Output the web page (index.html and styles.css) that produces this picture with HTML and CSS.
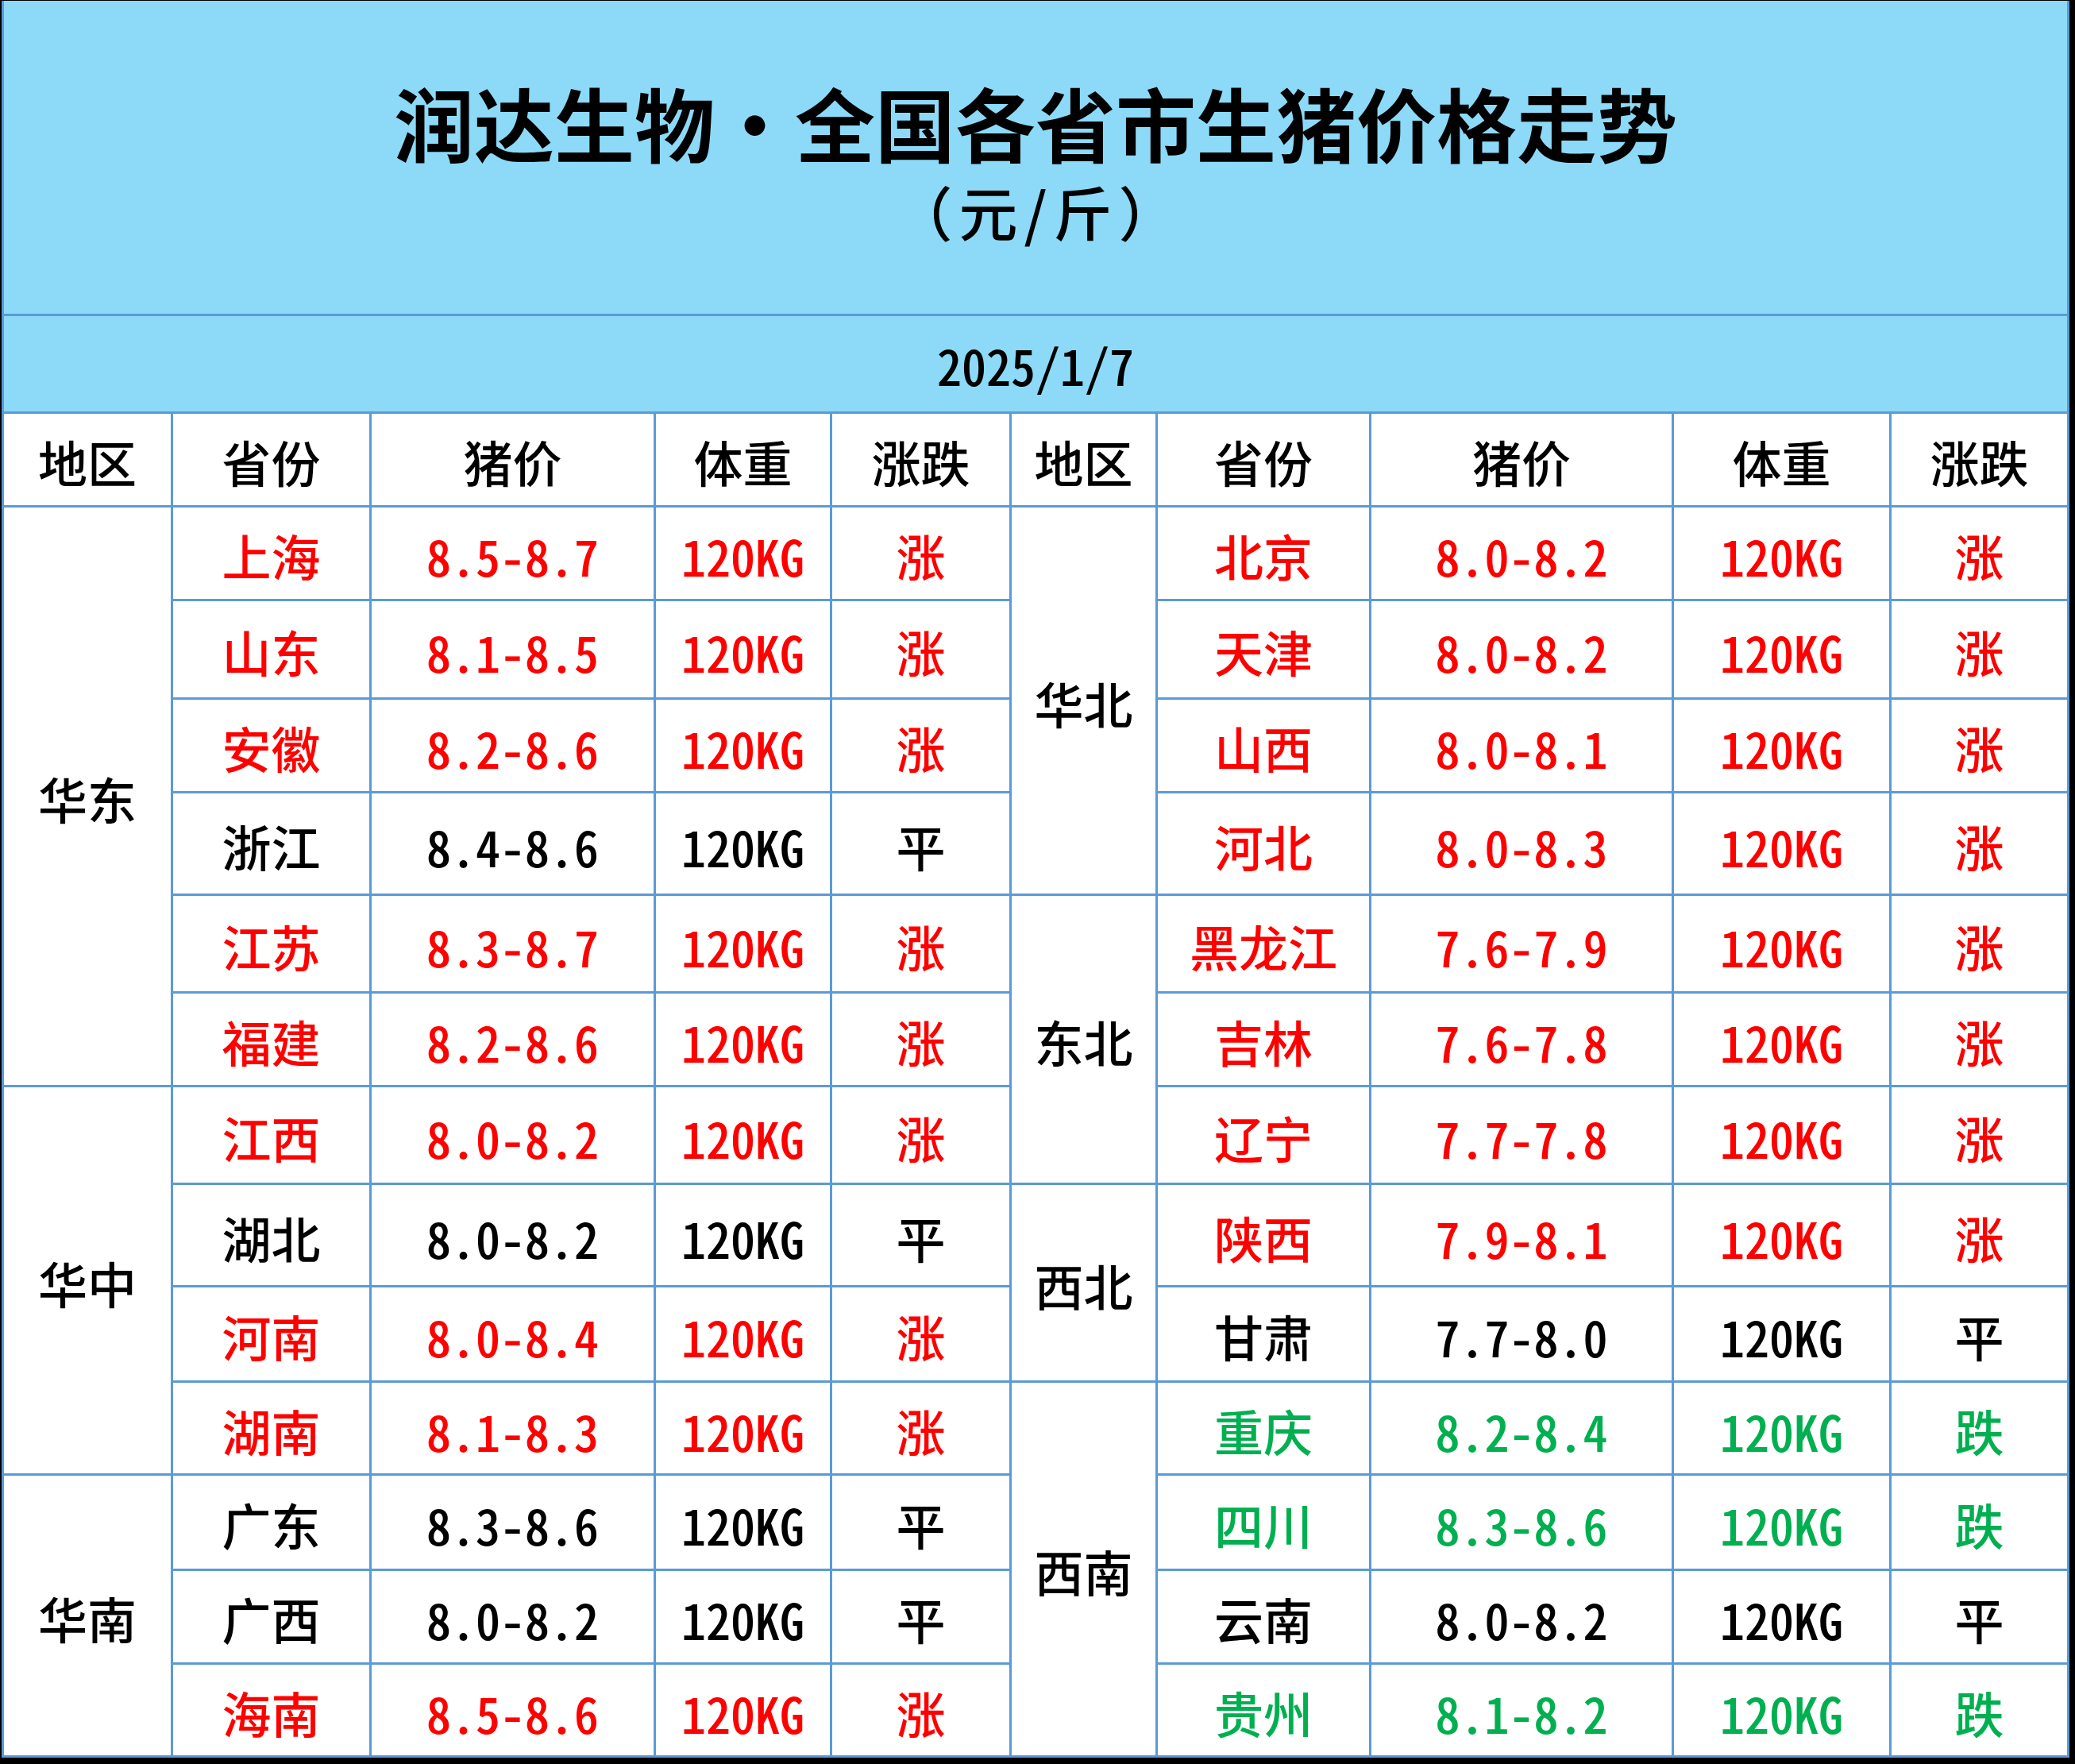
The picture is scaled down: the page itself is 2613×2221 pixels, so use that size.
FILE: index.html
```html
<!DOCTYPE html>
<html lang="zh-CN">
<head>
<meta charset="utf-8">
<title>润达生物·全国各省市生猪价格走势</title>
<link rel="stylesheet" href="styles.css">
</head>
<body>
<div class="sheet">
  <div class="title">
    <div class="title-main">润达生物·全国各省市生猪价格走势</div>
    <div class="title-sub">（元/斤）</div>
  </div>
  <div class="date num">2025/1/7</div>

  <div class="cell head">地区</div>
  <div class="cell head">省份</div>
  <div class="cell head">猪价</div>
  <div class="cell head">体重</div>
  <div class="cell head">涨跌</div>
  <div class="cell head">地区</div>
  <div class="cell head">省份</div>
  <div class="cell head">猪价</div>
  <div class="cell head">体重</div>
  <div class="cell head">涨跌</div>

  <!-- row 1 -->
  <div class="cell region span6">华东</div>
  <div class="cell up">上海</div><div class="cell num up">8.5-8.7</div><div class="cell num up">120KG</div><div class="cell up">涨</div>
  <div class="cell region span4">华北</div>
  <div class="cell up">北京</div><div class="cell num up">8.0-8.2</div><div class="cell num up">120KG</div><div class="cell up">涨</div>
  <!-- row 2 -->
  <div class="cell up">山东</div><div class="cell num up">8.1-8.5</div><div class="cell num up">120KG</div><div class="cell up">涨</div>
  <div class="cell up">天津</div><div class="cell num up">8.0-8.2</div><div class="cell num up">120KG</div><div class="cell up">涨</div>
  <!-- row 3 -->
  <div class="cell up">安徽</div><div class="cell num up">8.2-8.6</div><div class="cell num up">120KG</div><div class="cell up">涨</div>
  <div class="cell up">山西</div><div class="cell num up">8.0-8.1</div><div class="cell num up">120KG</div><div class="cell up">涨</div>
  <!-- row 4 -->
  <div class="cell">浙江</div><div class="cell num">8.4-8.6</div><div class="cell num">120KG</div><div class="cell">平</div>
  <div class="cell up">河北</div><div class="cell num up">8.0-8.3</div><div class="cell num up">120KG</div><div class="cell up">涨</div>
  <!-- row 5 -->
  <div class="cell up">江苏</div><div class="cell num up">8.3-8.7</div><div class="cell num up">120KG</div><div class="cell up">涨</div>
  <div class="cell region span3">东北</div>
  <div class="cell up">黑龙江</div><div class="cell num up">7.6-7.9</div><div class="cell num up">120KG</div><div class="cell up">涨</div>
  <!-- row 6 -->
  <div class="cell up">福建</div><div class="cell num up">8.2-8.6</div><div class="cell num up">120KG</div><div class="cell up">涨</div>
  <div class="cell up">吉林</div><div class="cell num up">7.6-7.8</div><div class="cell num up">120KG</div><div class="cell up">涨</div>
  <!-- row 7 -->
  <div class="cell region span4">华中</div>
  <div class="cell up">江西</div><div class="cell num up">8.0-8.2</div><div class="cell num up">120KG</div><div class="cell up">涨</div>
  <div class="cell up">辽宁</div><div class="cell num up">7.7-7.8</div><div class="cell num up">120KG</div><div class="cell up">涨</div>
  <!-- row 8 -->
  <div class="cell">湖北</div><div class="cell num">8.0-8.2</div><div class="cell num">120KG</div><div class="cell">平</div>
  <div class="cell region span2">西北</div>
  <div class="cell up">陕西</div><div class="cell num up">7.9-8.1</div><div class="cell num up">120KG</div><div class="cell up">涨</div>
  <!-- row 9 -->
  <div class="cell up">河南</div><div class="cell num up">8.0-8.4</div><div class="cell num up">120KG</div><div class="cell up">涨</div>
  <div class="cell">甘肃</div><div class="cell num">7.7-8.0</div><div class="cell num">120KG</div><div class="cell">平</div>
  <!-- row 10 -->
  <div class="cell up">湖南</div><div class="cell num up">8.1-8.3</div><div class="cell num up">120KG</div><div class="cell up">涨</div>
  <div class="cell region span4">西南</div>
  <div class="cell down">重庆</div><div class="cell num down">8.2-8.4</div><div class="cell num down">120KG</div><div class="cell down">跌</div>
  <!-- row 11 -->
  <div class="cell region span3">华南</div>
  <div class="cell">广东</div><div class="cell num">8.3-8.6</div><div class="cell num">120KG</div><div class="cell">平</div>
  <div class="cell down">四川</div><div class="cell num down">8.3-8.6</div><div class="cell num down">120KG</div><div class="cell down">跌</div>
  <!-- row 12 -->
  <div class="cell">广西</div><div class="cell num">8.0-8.2</div><div class="cell num">120KG</div><div class="cell">平</div>
  <div class="cell">云南</div><div class="cell num">8.0-8.2</div><div class="cell num">120KG</div><div class="cell">平</div>
  <!-- row 13 -->
  <div class="cell up">海南</div><div class="cell num up">8.5-8.6</div><div class="cell num up">120KG</div><div class="cell up">涨</div>
  <div class="cell down">贵州</div><div class="cell num down">8.1-8.2</div><div class="cell num down">120KG</div><div class="cell down">跌</div>
</div>
</body>
</html>
```

FILE: styles.css
```css
html, body {
  margin: 0;
  padding: 0;
  background: #000;
}

body {
  padding-top: 1px;
}

.sheet {
  display: grid;
  box-sizing: border-box;
  width: 2604px;
  margin-left: 2px;
  border-left: 3px solid #5b9bd5;
  background: #fff;
  grid-template-columns: 213px 250px 358px 222px 226px 184px 269px 381px 274px 224px;
  grid-template-rows: 397px 123px 118px 118px 124px 118px 129px 123px 118px 123px 129px 120px 117px 120px 118px 117px;
  font-family: "Noto Sans CJK SC", "Noto Sans", sans-serif;
  font-weight: 500;
  color: #000;
}

.title {
  grid-column: 1 / -1;
  box-sizing: border-box;
  background: #8cdaf7;
  border-right: 3px solid #5b9bd5;
  border-bottom: 3px solid #5b9bd5;
  display: flex;
  flex-direction: column;
  align-items: center;
  justify-content: flex-start;
  padding-top: 97px;
}

.title-main {
  font-size: 101px;
  line-height: 110px;
  font-weight: 700;
  font-feature-settings: "fwid";
}

.title-sub {
  font-size: 74px;
  line-height: 84px;
  font-weight: 500;
  letter-spacing: 8px;
  margin-top: 15px;
  padding-left: 8px;
}

.date {
  grid-column: 1 / -1;
  box-sizing: border-box;
  background: #8cdaf7;
  border-right: 3px solid #5b9bd5;
  border-bottom: 3px solid #5b9bd5;
  display: flex;
  align-items: center;
  justify-content: center;
  font-size: 62px;
  padding-top: 2px;
}

.cell {
  box-sizing: border-box;
  border-right: 3px solid #5b9bd5;
  border-bottom: 3px solid #5b9bd5;
  display: flex;
  align-items: center;
  justify-content: center;
  font-size: 62px;
  line-height: 1;
  padding-top: 5px;
  white-space: nowrap;
}

.num {
  font-feature-settings: "hwid";
}

.up { color: #ff0000; }
.down { color: #00b050; }

.span2 { grid-row: span 2; }
.span3 { grid-row: span 3; }
.span4 { grid-row: span 4; }
.span6 { grid-row: span 6; }
```
